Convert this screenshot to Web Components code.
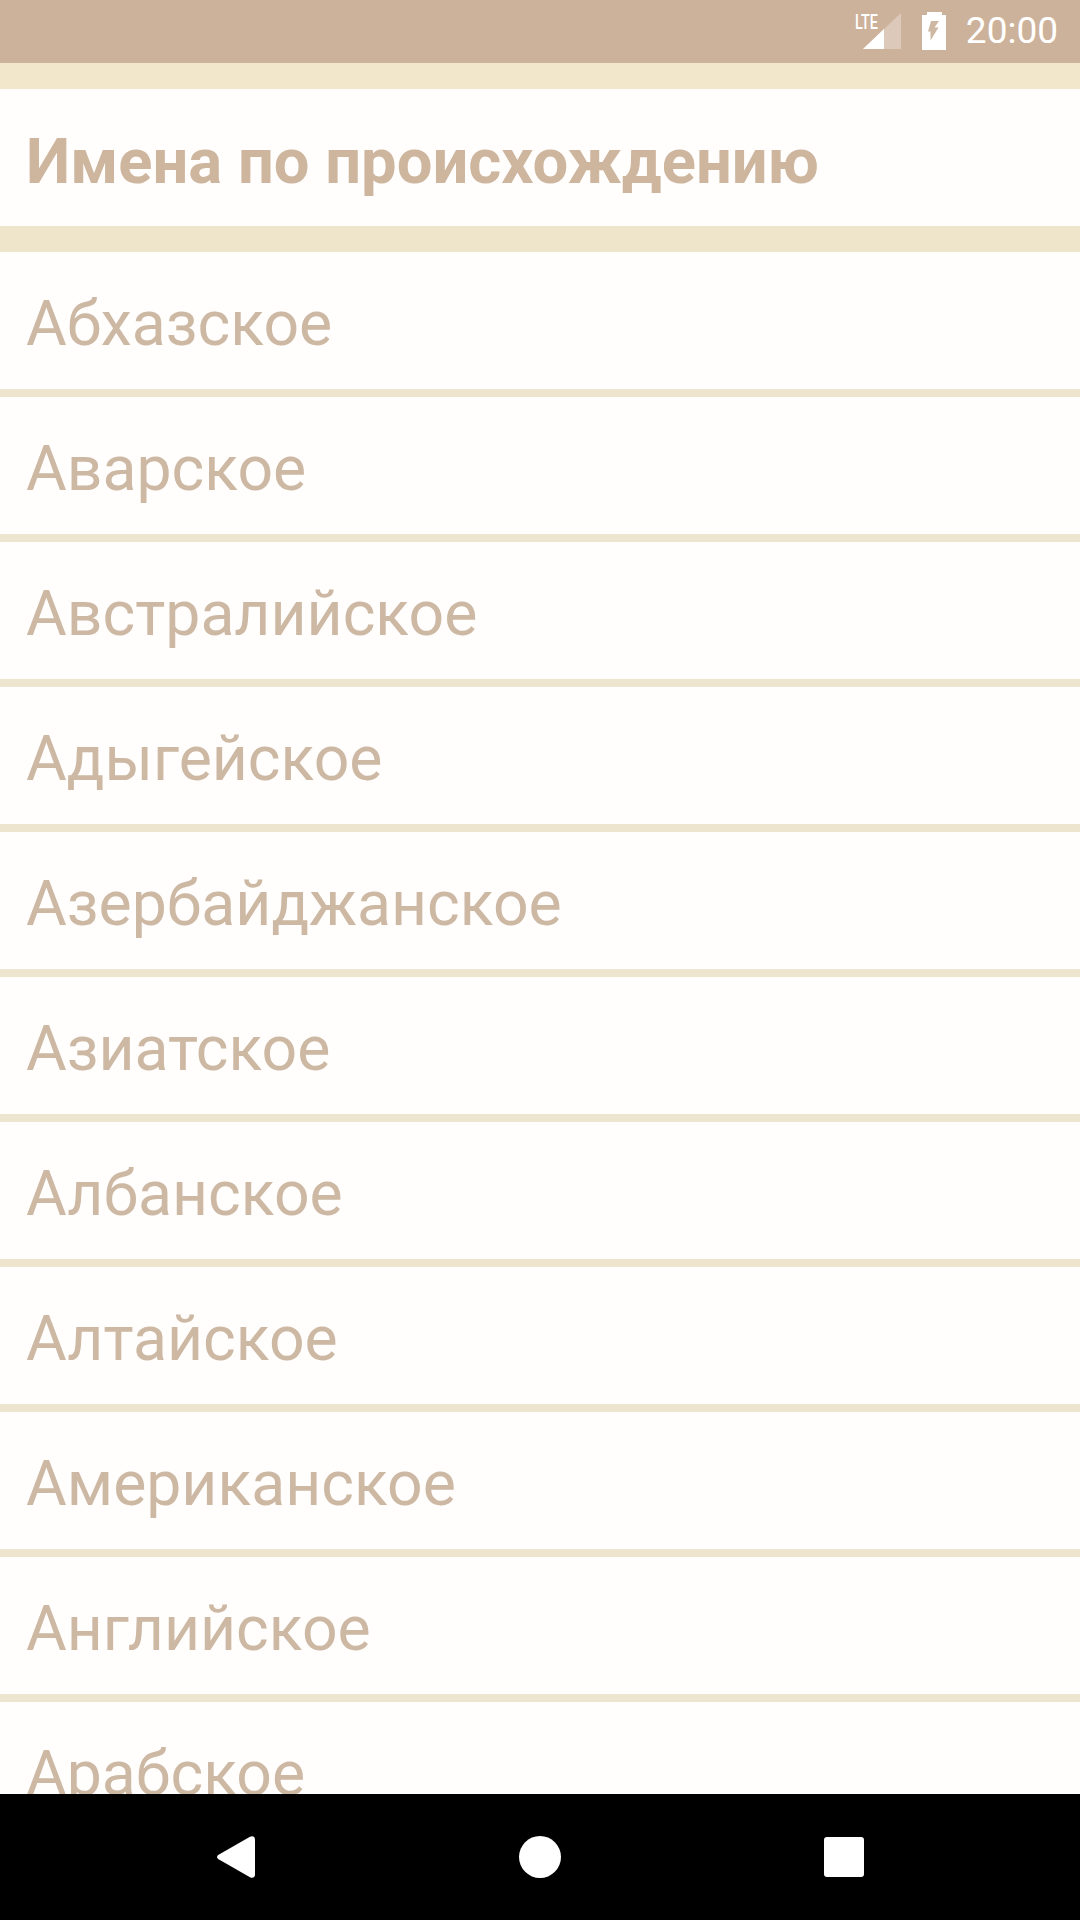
<!DOCTYPE html>
<html lang="ru">
<head>
<meta charset="utf-8">
<title>Имена по происхождению</title>
<style>
  html, body { margin: 0; padding: 0; }
  body { width: 1080px; height: 1920px; overflow: hidden; font-family: Roboto, "Liberation Sans", sans-serif; }
  origin-screen { height: 1920px; }
</style>
</head>
<body>
<origin-screen>
  <origin-header>Имена по происхождению</origin-header>
  <origin-row>Абхазское</origin-row>
  <origin-row>Аварское</origin-row>
  <origin-row>Австралийское</origin-row>
  <origin-row>Адыгейское</origin-row>
  <origin-row>Азербайджанское</origin-row>
  <origin-row>Азиатское</origin-row>
  <origin-row>Албанское</origin-row>
  <origin-row>Алтайское</origin-row>
  <origin-row>Американское</origin-row>
  <origin-row>Английское</origin-row>
  <origin-row>Арабское</origin-row>
</origin-screen>

<script>
// Android status bar
class StatusBar extends HTMLElement {
  constructor() {
    super();
    this.attachShadow({ mode: 'open' });
    this.shadowRoot.innerHTML = `
      <style>
        :host {
          display: flex;
          flex: none;
          align-items: center;
          justify-content: flex-end;
          height: 63px;
          padding: 0 22px 1px 0;
          box-sizing: border-box;
          background: #cdb29b;
          color: #fff;
        }
        .signal { position: relative; width: 46px; height: 38px; margin-right: 21px; }
        .signal svg { position: absolute; right: 0; top: 1px; }
        .lte {
          position: absolute;
          left: 0;
          top: 0;
          font: 500 20px/20px Roboto, sans-serif;
          transform: scaleX(.72);
          transform-origin: left top;
        }
        .battery { display: block; margin-right: 20px; }
        .time { font-size: 37px; line-height: 62px; }
      </style>
      <div class="signal">
        <svg width="38" height="36" viewBox="0 0 38 36">
          <path d="M38 0V36H0Z" fill="#fff" fill-opacity=".3"/>
          <path d="M21 16V36H0Z" fill="#fff"/>
        </svg>
        <span class="lte">LTE</span>
      </div>
      <svg class="battery" width="24" height="38" viewBox="0 0 24 38">
        <path fill="#fff" d="M5 0H20V3H24V38H0V3H5Z"/>
        <path fill="#cfb8a3" d="M9 9H17L12.5 15.5H16.5L8.5 28.5V19.5H6Z"/>
      </svg>
      <span class="time">20:00</span>
    `;
  }
}

// Section title on a white strip, with a sand band above and below
class OriginHeader extends HTMLElement {
  constructor() {
    super();
    this.attachShadow({ mode: 'open' });
    this.shadowRoot.innerHTML = `
      <style>
        :host {
          display: flex;
          flex: none;
          align-items: center;
          height: 131px;
          padding: 6px 0 0 26px;
          border-top: 26px solid #f2e6cb;
          border-bottom: 26px solid #eee5ca;
          background: #fffefd;
          color: #cdb59e;
          font-size: 63.3px;
          font-weight: 700;
        }
      </style>
      <slot></slot>
    `;
  }
}

class OriginRow extends HTMLElement {
  constructor() {
    super();
    this.attachShadow({ mode: 'open' });
    this.shadowRoot.innerHTML = `
      <style>
        :host {
          display: flex;
          flex: none;
          align-items: center;
          height: 131px;
          padding: 6px 0 0 26px;
          border-bottom: 8px solid #eee5ce;
          background: #fffefd;
          color: #cdb8a3;
          font-size: 62.5px;
        }
      </style>
      <slot></slot>
    `;
  }
}

// Android navigation bar
class NavBar extends HTMLElement {
  constructor() {
    super();
    this.attachShadow({ mode: 'open' });
    this.shadowRoot.innerHTML = `
      <style>
        :host {
          display: flex;
          flex: none;
          align-items: center;
          justify-content: center;
          height: 126px;
          padding-left: 1px;
          background: #000;
        }
        svg { display: block; }
        .home { margin: 0 263px 0 264px; }
      </style>
      <svg width="38" height="42" viewBox="0 0 38 42">
        <path fill="#fff" d="M2 18.5L33 .8C35.5-.6 38 .6 38 3.5V38.5C38 41.4 35.5 42.6 33 41.2L2 23.5C-.6 22 -.6 20 2 18.5Z"/>
      </svg>
      <svg class="home" width="42" height="42" viewBox="0 0 42 42"><circle cx="21" cy="21" r="21" fill="#fff"/></svg>
      <svg width="40" height="40" viewBox="0 0 40 40"><rect width="40" height="40" rx="3" fill="#fff"/></svg>
    `;
  }
}

// Screen frame: status bar on top, clipped list, nav bar at the bottom
class OriginScreen extends HTMLElement {
  constructor() {
    super();
    this.attachShadow({ mode: 'open' });
    this.shadowRoot.innerHTML = `
      <style>
        :host { display: flex; flex-direction: column; background: #fff; }
        .list { display: flex; flex: 1; flex-direction: column; min-height: 0; overflow: hidden; }
      </style>
      <status-bar></status-bar>
      <div class="list"><slot></slot></div>
      <nav-bar></nav-bar>
    `;
  }
}

customElements.define('status-bar', StatusBar);
customElements.define('nav-bar', NavBar);
customElements.define('origin-header', OriginHeader);
customElements.define('origin-row', OriginRow);
customElements.define('origin-screen', OriginScreen);
</script>
</body>
</html>
